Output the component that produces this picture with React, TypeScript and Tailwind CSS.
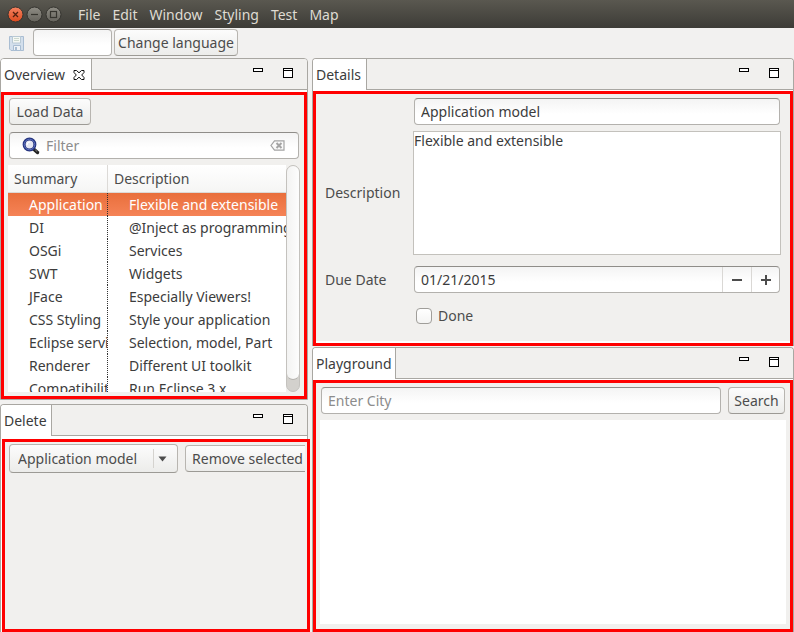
import { useState } from "react";
import type { ReactNode } from "react";
import clsx from "clsx";

const rows: [string, string][] = [
  ["Application model", "Flexible and extensible"],
  ["DI", "@Inject as programming mode"],
  ["OSGi", "Services"],
  ["SWT", "Widgets"],
  ["JFace", "Especially Viewers!"],
  ["CSS Styling", "Style your application"],
  ["Eclipse services", "Selection, model, Part"],
  ["Renderer", "Different UI toolkit"],
  ["Compatibility Layer", "Run Eclipse 3.x"],
];

const menus = ["File", "Edit", "Window", "Styling", "Test", "Map"];

const field =
  "h-[27px] rounded-[4px] border border-[#b3b1ad] border-t-[#8f8d89] bg-linear-to-b from-[#f4f4f4] to-white to-60% px-[6px] text-[#3c3c3c] placeholder:text-[#8c8c8c] placeholder:opacity-100 outline-none";
const button =
  "h-[27px] shrink-0 rounded-[4px] border border-[#b8b5b0] border-b-[#9c9a95] bg-linear-to-b from-[#fcfcfc] to-[#ececea] text-center whitespace-nowrap text-[#4c4c4c]";

function WindowButton({ label, kind }: { label: string; kind: "close" | "min" | "max" }) {
  const close = kind === "close";
  return (
    <button aria-label={label} className="size-[17px]">
      <svg viewBox="0 0 17 17" className="size-full">
        <defs>
          <linearGradient id={`wb-${kind}`} x1="0" y1="0" x2="0" y2="1">
            <stop offset="0" stopColor={close ? "#f58361" : "#8f8d85"} />
            <stop offset="1" stopColor={close ? "#dd4a1e" : "#65635c"} />
          </linearGradient>
        </defs>
        <circle cx="8.5" cy="8.5" r="7.5" fill={`url(#wb-${kind})`} stroke="#35342f" />
        {kind === "close" && <path d="M6 6l5 5M11 6l-5 5" stroke="#51200f" strokeWidth="1.3" />}
        {kind === "min" && <path d="M5 8.5h7" stroke="#36352f" strokeWidth="1.2" />}
        {kind === "max" && <rect x="5.5" y="5.5" width="6" height="6" fill="none" stroke="#36352f" strokeWidth="1.2" />}
      </svg>
    </button>
  );
}

interface PanelProps {
  title: string;
  tab: string;
  closable?: boolean;
  className?: string;
  frame: string;
  children: ReactNode;
}

function Panel({ title, tab, closable, className, frame, children }: PanelProps) {
  return (
    <section className={clsx("flex min-h-0 min-w-0 flex-col rounded-t-[4px] border border-[#a9a7a2] bg-white", className)}>
      <header className="flex h-[31px] shrink-0">
        <h2 className={clsx("flex items-center gap-[8px] rounded-tl-[3px] border-r border-[#a9a7a2] bg-white pl-[3px] whitespace-nowrap text-[#3c3c3c]", tab)}>
          {title}
          {closable && (
            <button aria-label="Close Overview">
              <svg width="12" height="10" viewBox="0 0 12 10" fill="white" stroke="#111">
                <path d="M1 .5h2.500L6 2.800L8.500 .5H11v2L8.700 5L11 7.500v2H8.500L6 7.200L3.500 9.500H1v-2L3.300 5L1 2.500z" />
              </svg>
            </button>
          )}
        </h2>
        <div className="flex flex-1 items-start justify-end gap-[20px] rounded-tr-[3px] border-b border-[#a9a7a2] bg-[#f1f0ee] pt-[9px] pr-[14px]">
          <button aria-label={`Minimize ${title}`} className="h-[4px] w-[10px] border border-black bg-white" />
          <button aria-label={`Maximize ${title}`} className="flex size-[10px] items-start border border-black bg-white pt-px">
            <span className="h-px w-full bg-black" />
          </button>
        </div>
      </header>
      <div className={clsx("flex min-h-0 flex-1 flex-col border-[3px] border-[#ff0000] bg-[#f1f0ee]", frame)}>{children}</div>
    </section>
  );
}

function Overview() {
  const [selected, setSelected] = useState(0);
  return (
    <Panel title="Overview" tab="w-[91px]" closable frame="mt-[2px] p-[4px] pt-[3px]">
      <button className={clsx(button, "ml-px w-[82px]")}>Load Data</button>
      <div className={clsx(field, "mx-px mt-[7px] flex shrink-0 items-center gap-[6px] pl-[12px]")}>
        <svg width="18" height="18" viewBox="0 0 18 18" fill="none" className="shrink-0">
          <path d="M11 11.5l4.5 4" stroke="#222" strokeWidth="3.4" strokeLinecap="round" />
          <path d="M13.2 12.8l2 1.8" stroke="#8a8a8a" strokeWidth="1" />
          <circle cx="7.5" cy="7.5" r="5.4" fill="#e4e6f3" stroke="#25347e" strokeWidth="3" />
          <circle cx="7.5" cy="7.5" r="5.3" stroke="#5f74c4" strokeWidth="1" />
          <path d="M5 8a3 3 0 0 1 3-3" stroke="white" strokeWidth="1.2" />
        </svg>
        <input aria-label="Filter" placeholder="Filter" className="w-0 flex-1 outline-none placeholder:text-[#8c8c8c]" />
        <button aria-label="Clear filter" className="mr-[7px]">
          <svg width="15" height="11" viewBox="0 0 15 11" fill="none" stroke="#a4a4a4">
            <path d="M4.5 .8H14v9.4H4.5L1 5.5z" fill="#fafafa" strokeWidth="1.2" />
            <path d="M6.5 3l5 5M11.5 3l-5 5" strokeWidth="2" />
          </svg>
        </button>
      </div>
      <div className="mt-[6px] flex min-h-0 flex-1">
        <div className="min-w-0 flex-1 overflow-hidden bg-white">
          <table className="w-full table-fixed border-separate border-spacing-0 text-left text-[#3c3c3c]">
            <thead>
              <tr className="h-[28px] bg-linear-to-b from-white to-[#f5f5f4] text-[#4c4c4c]">
                <th className="w-[100px] border-r border-b border-[#dcdad7] p-0 pl-[6px] font-normal">Summary</th>
                <th className="border-b border-[#dcdad7] p-0 pl-[6px] font-normal">Description</th>
              </tr>
            </thead>
            <tbody>
              {rows.map(([summary, description], i) => (
                <tr
                  key={summary}
                  onClick={() => setSelected(i)}
                  className={clsx("h-[23px]", i === selected && "bg-linear-to-b from-[#e96f3c] to-[#f58356] text-white")}
                >
                  <td className="overflow-hidden border-r border-dotted border-[#333] p-0 pl-[21px] whitespace-nowrap">{summary}</td>
                  <td className="overflow-hidden p-0 pl-[21px] whitespace-nowrap">{description}</td>
                </tr>
              ))}
            </tbody>
          </table>
        </div>
        <div className="w-[14px] rounded-[7px] border border-[#c4c2be] bg-[#d3d1cd]">
          <div className="h-[95%] rounded-[6px] border-b border-[#b5b3af] bg-linear-to-r from-[#f3f3f2] to-[#fdfdfd]" />
        </div>
      </div>
    </Panel>
  );
}

function DeletePanel() {
  return (
    <Panel title="Delete" tab="w-[51px]" className="border-b-0" frame="z-10 mt-[3px] -mr-[3px] ml-px">
      <div className="mr-[2px] flex flex-1 items-start gap-[7px] overflow-hidden py-[2px] pl-[4px]">
        <div className="relative shrink-0">
          <select aria-label="Item to delete" className={clsx(button, "h-[29px] w-[169px] appearance-none pr-[30px] pl-[8px] text-left")}>
            {rows.map(([summary]) => (
              <option key={summary}>{summary}</option>
            ))}
          </select>
          <span className="pointer-events-none absolute inset-y-[5px] right-0 flex w-[25px] items-center border-l border-[#d5d3cf] pl-[4px]">
            <svg width="9" height="6" viewBox="0 0 9 6">
              <path d="M.5 .5h8l-4 5z" fill="#4c4c4c" />
            </svg>
          </span>
        </div>
        <button className={clsx(button, "mt-px w-[125px]")}>Remove selected</button>
      </div>
    </Panel>
  );
}

function Details() {
  return (
    <Panel title="Details" tab="w-[54px]" className="border-b-0" frame="mt-px">
      <div className="grid flex-1 grid-cols-[88px_1fr] content-start items-center border-b-2 border-white px-[9px] pt-[4px]">
        <input aria-label="Summary" defaultValue="Application model" className={clsx(field, "col-start-2 mx-px")} />
        <label htmlFor="description" className="mt-[6px]">Description</label>
        <textarea
          id="description"
          defaultValue="Flexible and extensible"
          className="mt-[6px] block h-[124px] resize-none border border-[#c3c1bc] bg-white leading-[18px] text-[#3c3c3c] outline-none"
        />
        <label htmlFor="due" className="mt-[11px]">Due Date</label>
        <div className={clsx(field, "mx-px mt-[11px] flex pr-0")}>
          <input id="due" defaultValue="01/21/2015" className="w-0 flex-1 outline-none" />
          <button aria-label="Earlier" className="flex w-[29px] items-center justify-center border-l border-[#dad8d5]">
            <span className="h-[2px] w-[10px] bg-[#4c4c4c]" />
          </button>
          <button aria-label="Later" className="flex w-[28px] items-center justify-center border-l border-[#dad8d5]">
            <svg width="10" height="10" viewBox="0 0 10 10" stroke="#4c4c4c" strokeWidth="2">
              <path d="M0 5h10M5 0v10" />
            </svg>
          </button>
        </div>
        <label className="col-start-2 mt-[13px] ml-[3px] flex items-center gap-[6px]">
          <input type="checkbox" className="size-[16px] appearance-none rounded-[4px] border border-[#a09e9a] bg-linear-to-b from-white to-[#f4f4f3] checked:bg-[#e96f3c]" />
          Done
        </label>
      </div>
    </Panel>
  );
}

function Playground() {
  return (
    <Panel title="Playground" tab="w-[83px]" className="border-b-0" frame="mt-px p-[4px] pb-[5px]">
      <div className="mx-px flex gap-[7px]">
        <input aria-label="City" placeholder="Enter City" className={clsx(field, "w-0 flex-1")} />
        <button className={clsx(button, "w-[57px]")}>Search</button>
      </div>
      <div className="mt-[6px] flex-1 bg-white" />
    </Panel>
  );
}

export default function App() {
  return (
    <div className="flex h-screen flex-col bg-[#f2f1f0] font-['Noto_Sans','Open_Sans',sans-serif] text-[14px] leading-[20px] text-[#4c4c4c]">
      <header className="flex h-[28px] shrink-0 items-center bg-linear-to-b from-[#5a5850] to-[#3d3c37] pl-[7px] text-[#dfdbd2]">
        <div className="flex gap-[2px]">
          <WindowButton label="Close" kind="close" />
          <WindowButton label="Minimize" kind="min" />
          <WindowButton label="Maximize" kind="max" />
        </div>
        <nav className="ml-[16px] flex gap-[12px] pt-[2px]">
          {menus.map((menu) => (
            <button key={menu}>{menu}</button>
          ))}
        </nav>
      </header>
      <div role="toolbar" className="flex h-[30px] shrink-0 items-start pt-px pl-[9px]">
        <button aria-label="Save" className="mt-[7px] mr-[9px]">
          <svg width="15" height="15" viewBox="0 0 15 15" fill="none">
            <path d="M.5 .5h14v14H2l-1.500-1.500z" fill="#d3dfec" stroke="#a9bdd2" />
            <path d="M3.500 .5h8v6.500h-8z" fill="#f5f8f4" stroke="#b9c9d4" />
            <path d="M5 2.500h5M5 4.500h5" stroke="#ccd8ce" />
            <path d="M4.500 9.500h7v5h-7z" fill="#eef2f6" stroke="#a9bdd2" />
            <path d="M6 11h2v3H6z" fill="#a9bdd2" />
          </svg>
        </button>
        <input aria-label="Language" className={clsx(field, "mr-[2px] w-[79px]")} />
        <button className={clsx(button, "w-[124px]")}>Change language</button>
      </div>
      <main className="grid min-h-0 flex-1 grid-cols-[308fr_482fr] gap-[4px]">
        <div className="grid min-h-0 min-w-0 grid-rows-[342fr_228fr] gap-[4px]">
          <Overview />
          <DeletePanel />
        </div>
        <div className="grid min-h-0 min-w-0 grid-rows-[288fr_285fr] gap-px">
          <Details />
          <Playground />
        </div>
      </main>
    </div>
  );
}
